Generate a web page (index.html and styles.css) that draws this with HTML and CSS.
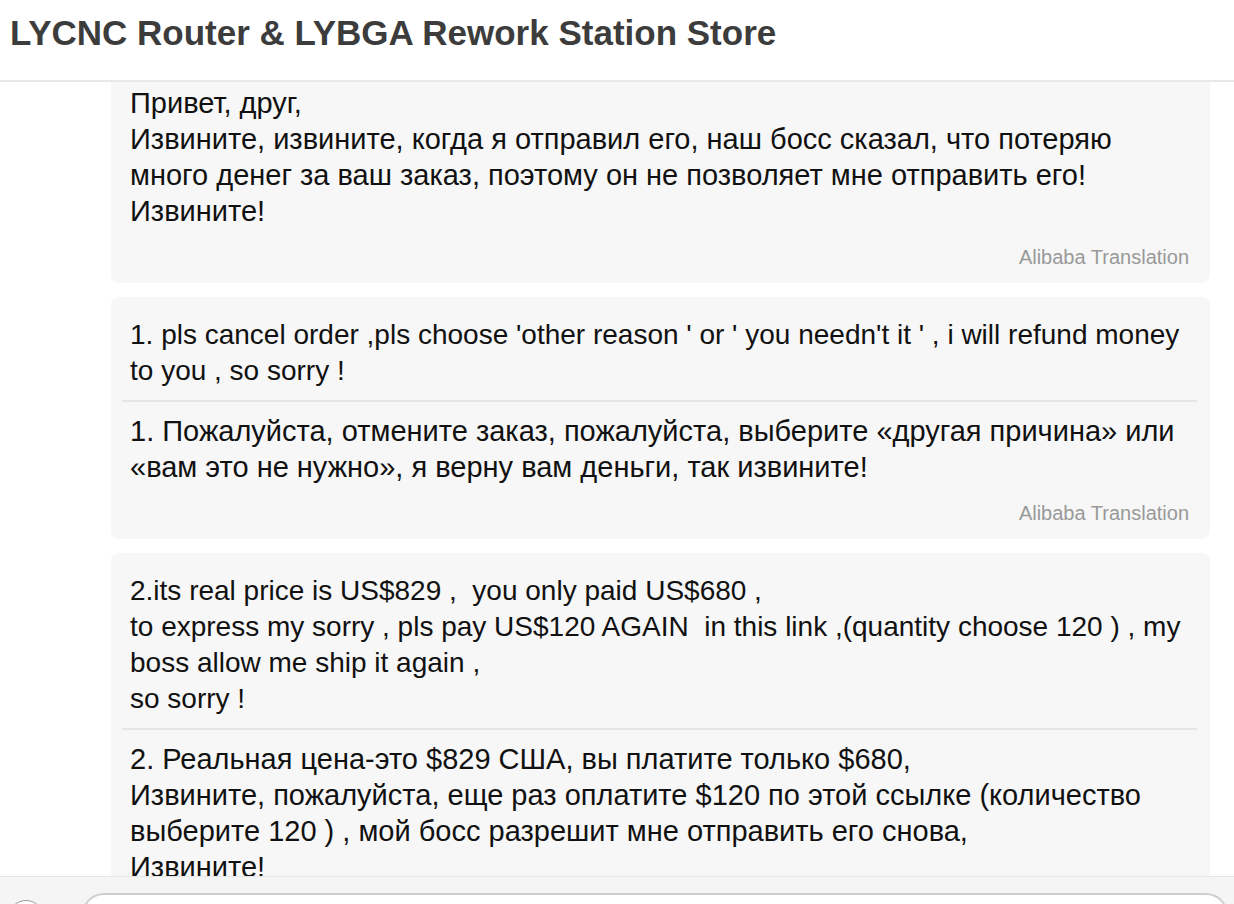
FILE: index.html
```html
<!DOCTYPE html>
<html lang="ru">
<head>
<meta charset="utf-8">
<title>LYCNC Router &amp; LYBGA Rework Station Store</title>
<link rel="stylesheet" href="styles.css">
</head>
<body>
<header class="top">
  <h1 class="title">LYCNC Router &amp; LYBGA Rework Station Store</h1>
</header>
<main class="chat">
  <div class="feed">
    <div class="bubble bubble-first">
      <div class="msg ru">Привет, друг,
Извините, извините, когда я отправил его, наш босс сказал, что потеряю
много денег за ваш заказ, поэтому он не позволяет мне отправить его!
Извините!</div>
      <div class="source">Alibaba Translation</div>
    </div>
    <div class="bubble">
      <div class="msg en">1. pls cancel order ,pls choose 'other reason ' or ' you needn't it ' , i will refund money
to you , so sorry !</div>
      <div class="divider"></div>
      <div class="msg ru">1. Пожалуйста, отмените заказ, пожалуйста, выберите «другая причина» или
«вам это не нужно», я верну вам деньги, так извините!</div>
      <div class="source">Alibaba Translation</div>
    </div>
    <div class="bubble">
      <div class="msg en">2.its real price is US$829 ,  you only paid US$680 ,
to express my sorry , pls pay US$120 AGAIN  in this link ,(quantity choose 120 ) , my
boss allow me ship it again ,
so sorry !</div>
      <div class="divider"></div>
      <div class="msg ru">2. Реальная цена-это $829 США, вы платите только $680,
Извините, пожалуйста, еще раз оплатите $120 по этой ссылке (количество
выберите 120 ) , мой босс разрешит мне отправить его снова,
Извините!</div>
    </div>
  </div>
</main>
<footer class="composer">
  <span class="round-btn"></span>
  <div class="input"></div>
</footer>
</body>
</html>
```
FILE: styles.css
```css
* { box-sizing: border-box; }
html, body { margin: 0; padding: 0; }
body {
  width: 1234px;
  height: 904px;
  overflow: hidden;
  display: flex;
  flex-direction: column;
  background: #fff;
  font-family: "Liberation Sans", Arial, sans-serif;
  color: #111;
}
.top {
  height: 82px;
  flex: none;
  border-bottom: 2px solid #e8e8e8;
  padding: 13px 0 0 10px;
}
.title {
  margin: 0;
  font-size: 35px;
  line-height: 40px;
  font-weight: 700;
  color: #3c3c3c;
}
.chat {
  flex: 1;
  overflow: hidden;
}
.feed {
  display: flex;
  flex-direction: column;
  gap: 14px;
  padding: 0 24px 0 111px;
}
.bubble {
  background: #f7f7f7;
  border-radius: 8px;
  padding: 20px 13px 15px 11px;
}
.bubble-first { margin-top: -17px; }
.msg {
  white-space: pre-wrap;
  line-height: 36px;
  padding: 0 8px;
  color: #111;
}
.msg.en { font-size: 28px; }
.msg.ru { font-size: 29px; }
.divider {
  height: 2px;
  background: #e6e6e6;
  margin: 11px 0;
}
.source {
  margin-top: 17px;
  text-align: right;
  font-size: 20px;
  line-height: 22px;
  color: #999;
  padding-right: 8px;
}
.composer {
  flex: none;
  height: 28px;
  border-top: 1px solid #e6e6e6;
  background: #f5f5f5;
  display: flex;
  align-items: flex-start;
  gap: 38px;
  padding: 16px 6px 0 8px;
  overflow: hidden;
}
.round-btn {
  flex: none;
  width: 36px;
  height: 36px;
  margin-top: 7px;
  border-radius: 50%;
  border: 1px solid #999;
  background: #fff;
}
.input {
  flex: 1;
  height: 44px;
  border: 2px solid #cfcfcf;
  border-radius: 22px;
  background: #fff;
}
```
